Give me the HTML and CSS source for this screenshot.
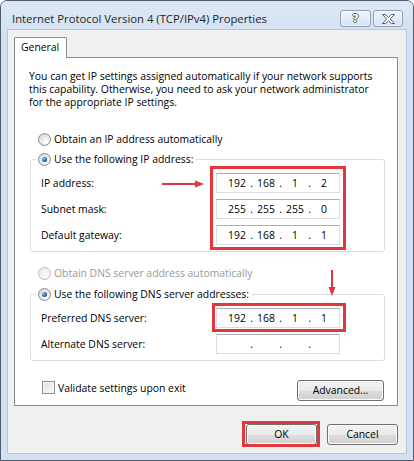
FILE: index.html
```html
<!DOCTYPE html>
<html>
<head>
<meta charset="utf-8">
<link rel="stylesheet" href="styles.css">
</head>
<body>
<div class="window">
  <div class="titlebar">
    <span class="title">Internet Protocol Version 4 (TCP/IPv4) Properties</span>
    <div class="caption-btns">
      <div class="cbtn help"><span class="qmark">?</span></div>
      <div class="cbtn close">
        <svg width="13" height="10" viewBox="0 0 13 10"><polygon points="0.5,0.5 3.6,0.5 6.5,3.3 9.4,0.5 12.5,0.5 8.3,5 12.5,9.5 9.4,9.5 6.5,6.7 3.6,9.5 0.5,9.5 4.7,5" fill="#ffffff" stroke="#5a5f66" stroke-width="1" stroke-linejoin="round"/></svg>
      </div>
    </div>
  </div>
  <div class="client">
    <div class="tabs"><div class="tab">General</div></div>
    <div class="panel">
      <p class="intro">You can get IP settings assigned automatically if your network supports<br>this capability. Otherwise, you need to ask your network administrator<br>for the appropriate IP settings.</p>

      <div class="radio-row"><span class="radio"></span><span>Obtain an IP address automatically</span></div>

      <fieldset class="group">
        <legend><span class="legend-row"><span class="radio checked"></span><span>Use the following IP address:</span></span></legend>
        <div class="rows">
          <div class="labels">
            <div class="lbl">IP address:</div>
            <div class="lbl">Subnet mask:</div>
            <div class="lbl">Default gateway:</div>
          </div>
          <div class="fields hl hl-ip">
            <div class="ip"><span class="seg">192</span><span class="dot">.</span><span class="seg">168</span><span class="dot">.</span><span class="seg">1</span><span class="dot">.</span><span class="seg">2</span></div>
            <div class="ip"><span class="seg">255</span><span class="dot">.</span><span class="seg">255</span><span class="dot">.</span><span class="seg">255</span><span class="dot">.</span><span class="seg">0</span></div>
            <div class="ip"><span class="seg">192</span><span class="dot">.</span><span class="seg">168</span><span class="dot">.</span><span class="seg">1</span><span class="dot">.</span><span class="seg">1</span></div>
          </div>
        </div>
      </fieldset>

      <div class="radio-row dns-auto disabled"><span class="radio"></span><span>Obtain DNS server address automatically</span></div>

      <fieldset class="group group-dns">
        <legend><span class="legend-row"><span class="radio checked"></span><span>Use the following DNS server addresses:</span></span></legend>
        <div class="rows">
          <div class="labels">
            <div class="lbl">Preferred DNS server:</div>
            <div class="lbl">Alternate DNS server:</div>
          </div>
          <div class="fields">
            <div class="ip hl hl-dns"><span class="seg">192</span><span class="dot">.</span><span class="seg">168</span><span class="dot">.</span><span class="seg">1</span><span class="dot">.</span><span class="seg">1</span></div>
            <div class="ip"><span class="seg"></span><span class="dot">.</span><span class="seg"></span><span class="dot">.</span><span class="seg"></span><span class="dot">.</span><span class="seg"></span></div>
          </div>
        </div>
      </fieldset>

      <div class="panel-foot">
        <div class="check-row"><span class="checkbox"></span><span>Validate settings upon exit</span></div>
        <div class="btn btn-adv">Advanced...</div>
      </div>

      <svg class="arrow arrow-h" width="42" height="8" viewBox="0 0 42 8"><line x1="0" y1="4" x2="35" y2="4" stroke="#e4373d" stroke-width="2"/><polygon points="33,0.5 42,4 33,7.5" fill="#e4373d"/></svg>
      <svg class="arrow arrow-v" width="8" height="26" viewBox="0 0 8 26"><line x1="4" y1="0" x2="4" y2="19" stroke="#e4373d" stroke-width="2"/><polygon points="0.5,17 7.5,17 4,26" fill="#e4373d"/></svg>
    </div>
    <div class="dialog-btns">
      <div class="btn btn-dlg hl hl-ok">OK</div>
      <div class="btn btn-dlg">Cancel</div>
    </div>
  </div>
</div>
</body>
</html>
```

FILE: styles.css
```css
* { box-sizing: border-box; }
html, body { margin: 0; padding: 0; background: #ffffff; }
body {
  font-family: "Open Sans", "Noto Sans", sans-serif;
  font-size: 10.4px;
  color: #000;
}

.window {
  width: 414px;
  height: 461px;
  border: 1px solid #4f5b6b;
  border-radius: 7px 7px 0 0;
  background: #d3e1f1;
  padding: 0 7px 7px;
  display: flex;
  flex-direction: column;
  overflow: hidden;
}

.titlebar {
  height: 29px;
  flex: none;
  margin: 0 -7px;
  padding: 0 10px 0 11px;
  display: flex;
  align-items: flex-start;
  justify-content: space-between;
  background: linear-gradient(#dce8f5, #d5e2f2);
}
.title {
  margin-top: 10px;
  line-height: 16px;
  font-size: 11.3px;
  color: #262626;
  white-space: nowrap;
}
.caption-btns {
  margin-top: 9px;
  display: flex;
  gap: 2px;
}
.cbtn {
  height: 17px;
  border: 1px solid #8d9fb6;
  border-radius: 3px;
  background: linear-gradient(rgba(255,255,255,0.55), rgba(214,226,240,0.4));
  box-shadow: inset 0 0 0 1px rgba(255,255,255,0.5);
  display: flex;
  align-items: center;
  justify-content: center;
}
.help { width: 31px; }
.close { width: 30px; }
.qmark {
  font-family: "DejaVu Sans", sans-serif;
  font-weight: 700;
  font-size: 11px;
  line-height: 12px;
  color: #fff;
  text-shadow: 1px 0 0 #5a5f66, -1px 0 0 #5a5f66, 0 1px 0 #5a5f66, 0 -1px 0 #5a5f66;
}

.client {
  flex: 1;
  background: #f0f0f0;
  padding: 7px 8px 0 6px;
  display: flex;
  flex-direction: column;
  box-shadow: 0 0 0 1px #b7c6d8;
}

.tabs { display: flex; flex: none; }
.tab {
  position: relative;
  z-index: 1;
  width: 53px;
  height: 21px;
  margin-bottom: -1px;
  padding-left: 6px;
  line-height: 19px;
  background: #fff;
  border: 1px solid #898c95;
  border-bottom: none;
  border-radius: 2px 2px 0 0;
}

.panel {
  position: relative;
  height: 349px;
  flex: none;
  background: #fff;
  border: 1px solid #898c95;
  display: flex;
  flex-direction: column;
}

.intro {
  margin: 12px 0 0 14px;
  line-height: 13px;
  white-space: nowrap;
}

.radio-row {
  display: flex;
  align-items: center;
  gap: 3px;
  height: 16px;
  margin: 22px 0 0 23px;
}
.radio-row.dns-auto { margin-top: 13px; }
.disabled { color: #9a9a9a; }

.radio {
  position: relative;
  width: 13px;
  height: 13px;
  flex: none;
  border-radius: 50%;
  border: 1px solid #8a8a8a;
  background: radial-gradient(circle at 65% 70%, #ffffff 0%, #e9e9e9 45%, #d3d3d3 100%);
}
.disabled .radio {
  border-color: #bdbdbd;
  background: radial-gradient(circle at 65% 70%, #fafafa 0%, #f0f0f0 60%, #e4e4e4 100%);
}
.radio.checked::after {
  content: "";
  position: absolute;
  left: 3px;
  top: 3px;
  width: 5px;
  height: 5px;
  border-radius: 50%;
  background: radial-gradient(circle at 35% 35%, #8cc2f2 0%, #2a64a8 55%, #0c2f5c 100%);
}

.group {
  margin: 4px 12px 0 15px;
  padding: 6px 0 6px 10px;
  border: 1px solid #d5dfe5;
  border-radius: 3px;
  min-width: 0;
}
.group-dns { margin-top: 5px; }
.group legend {
  margin-left: -5px;
  padding: 0 3px 0 2px;
}
.legend-row {
  display: flex;
  align-items: center;
  gap: 3px;
  height: 16px;
}

.rows { display: flex; }
.labels {
  display: flex;
  flex-direction: column;
  gap: 6px;
  width: 175px;
}
.lbl { height: 20px; line-height: 20px; white-space: nowrap; }
.fields {
  display: flex;
  flex-direction: column;
  gap: 6px;
  width: 124px;
}
.ip {
  height: 20px;
  display: flex;
  padding-left: 9px;
  line-height: 18px;
  background: #fff;
  border: 1px solid #dadde3;
  border-top-color: #abadb3;
}
.seg { width: 22px; text-align: center; }
.dot { width: 7px; text-align: center; }

.hl { position: relative; }
.hl::after {
  content: "";
  position: absolute;
  border: 3px solid #e4373d;
  pointer-events: none;
}
.hl-ip::after { top: -7px; right: -6px; bottom: -5px; left: -6px; }
.hl-dns::after { top: -6px; right: -7px; bottom: -5px; left: -5px; }
.hl-ok::after { top: -4px; right: -4px; bottom: -3px; left: -5px; }

.panel-foot {
  display: flex;
  justify-content: space-between;
  align-items: flex-start;
  margin: 19px 13px 0 27px;
}
.check-row {
  display: flex;
  align-items: center;
  gap: 3px;
  height: 13px;
  margin-top: 1px;
}
.checkbox {
  width: 13px;
  height: 13px;
  flex: none;
  border: 1px solid #8e8f8f;
  background: linear-gradient(135deg, #dcdcdc 0%, #f0f0f0 60%, #fbfbfb 100%);
  box-shadow: inset 0 0 0 1px #f4f4f4;
}

.btn {
  height: 21px;
  border: 1px solid #707070;
  border-radius: 3px;
  background: linear-gradient(#f2f2f2 0%, #ebebeb 50%, #dddddd 51%, #cfcfcf 100%);
  box-shadow: inset 0 0 0 1px #fbfbfb;
  text-align: center;
  line-height: 19px;
}
.btn-adv { width: 87px; }
.dialog-btns {
  display: flex;
  justify-content: flex-end;
  gap: 10px;
  margin-top: 18px;
}
.btn-dlg { width: 71px; }

.arrow { position: absolute; }
.arrow-h { left: 147px; top: 122px; }
.arrow-v { left: 313px; top: 212px; }
```
